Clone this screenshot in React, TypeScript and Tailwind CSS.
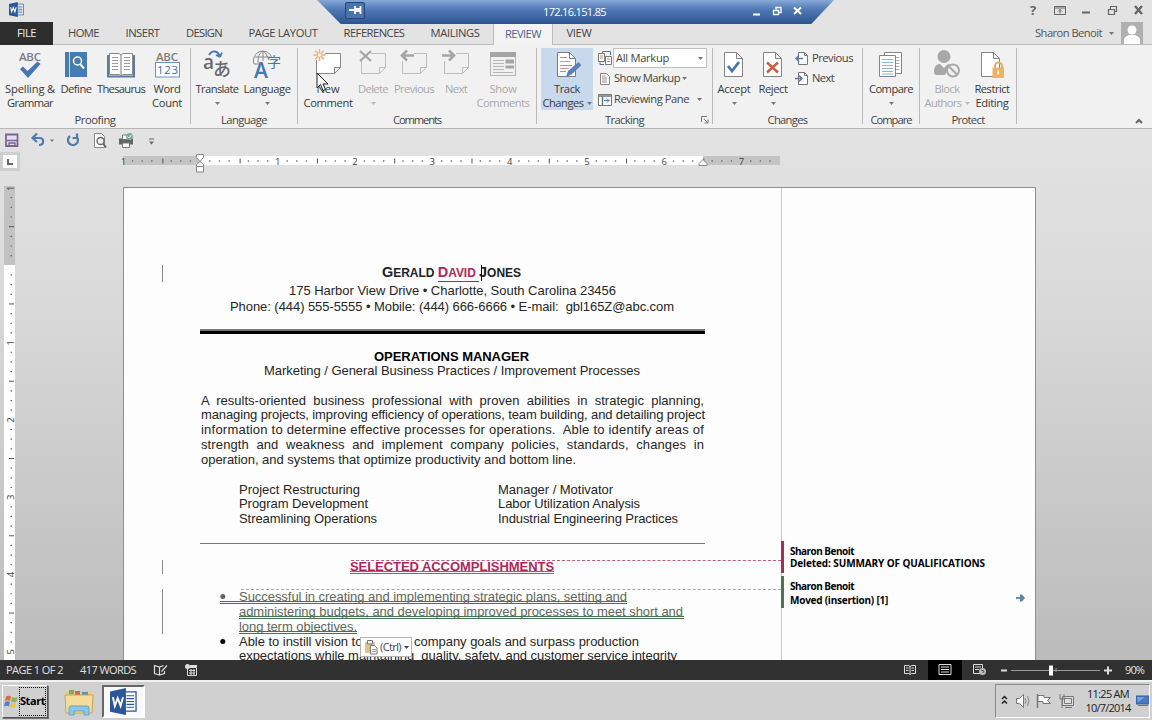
import React, { useLayoutEffect, useRef } from "react";

const UI = "font-['Open_Sans','Noto_Sans',sans-serif]";
const DOC = "font-['Liberation_Sans',Arial,sans-serif]";

/** Text tracked so that it fills exactly `w` pixels. */
function Fit({ w, className = "", children }: { w: number; className?: string; children: React.ReactNode }) {
  const ref = useRef<HTMLSpanElement>(null);
  useLayoutEffect(() => {
    const el = ref.current;
    if (!el) return;
    el.style.letterSpacing = "0px";
    const natural = el.getBoundingClientRect().width;
    const count = (el.textContent || "").length || 1;
    el.style.letterSpacing = `${(w - natural) / count}px`;
  }, [w]);
  return (
    <span ref={ref} className={`inline-block shrink-0 whitespace-pre ${className}`}>
      {children}
    </span>
  );
}

function Caret({ className = "text-[#777]" }: { className?: string }) {
  return (
    <svg width="5" height="3" viewBox="0 0 5 3" className={`shrink-0 ${className}`}>
      <path d="M0 0h5L2.5 3z" fill="currentColor" />
    </svg>
  );
}

type BtnProps = {
  icon: React.ReactNode;
  a: string;
  aw: number;
  b?: string;
  bw?: number;
  arrow?: boolean;
  disabled?: boolean;
  className: string;
};

function BigButton({ icon, a, aw, b, bw = 0, arrow, disabled, className }: BtnProps) {
  return (
    <div className={`flex h-[62px] shrink-0 flex-col items-center ${disabled ? "text-[#a9a9a9]" : "text-[#3a3a3a]"} ${className}`}>
      <div className="flex h-[34px] items-start justify-center pt-px">{icon}</div>
      <div className="flex h-[14px] items-center leading-[14px]">
        <Fit w={aw}>{a}</Fit>
      </div>
      <div className="flex h-[14px] items-center gap-[3px] leading-[14px]">
        {b && <Fit w={bw}>{b}</Fit>}
        {arrow && <Caret className={disabled ? "text-[#b9b9b9]" : "text-[#777]"} />}
      </div>
    </div>
  );
}

function Group({ label, lw, className, children, launcher }: { label: string; lw: number; className: string; children: React.ReactNode; launcher?: boolean }) {
  return (
    <div className={`relative mt-[3px] flex h-[76px] shrink-0 flex-col border-r border-[#b9b9b9] ${className}`}>
      <div className="flex h-[62px] pl-[2px]">{children}</div>
      <div className="mt-[3px] flex h-[14px] items-center justify-center leading-[14px] text-[#444]">
        <Fit w={lw}>{label}</Fit>
      </div>
      {launcher && (
        <svg className="absolute right-[3px] bottom-0" width="8" height="8" viewBox="0 0 8 8" fill="none" stroke="#777">
          <path d="M.5 6V.5H6M3 3l3.5 3.500M7 3.500V7H3.500" />
        </svg>
      )}
    </div>
  );
}

/* ---------- ribbon icons ---------- */

const SpellIcon = () => (
  <svg width="28" height="30" viewBox="0 0 28 30">
    <text x="3" y="11.500" fontSize="11.500" fontWeight="600" textLength="22" fill="#7d7d7d">ABC</text>
    <path d="M4 20l3-2.500 4.500 4.500L21.500 12.500l3 2.500L12 29z" fill="#4676b4" />
  </svg>
);
const DefineIcon = () => (
  <svg width="24" height="30" viewBox="0 0 24 30">
    <path d="M1 3h22v25H1z" fill="#457db0" />
    <path d="M5.500 3v25" stroke="#c7d8e8" />
    <circle cx="13.500" cy="12" r="4" fill="none" stroke="#fff" strokeWidth="1.500" />
    <path d="M16 15l4 4.500" stroke="#fff" strokeWidth="2" />
  </svg>
);
const ThesaurusIcon = () => (
  <svg width="30" height="30" viewBox="0 0 30 30" fill="none">
    <path d="M2 6v21.500h26V6" stroke="#5a7ba6" strokeWidth="2" />
    <path d="M3.500 4.500h9.500l2 1.500 2-1.500h9.500v21H17l-2 1.500-2-1.500H3.500z" fill="#fff" stroke="#888" />
    <path d="M15 6v20" stroke="#777" />
    <path d="M6 8.500h6M6 11.500h6M6 14.500h6M6 17.500h6M6 20.500h6M18 8.500h6M18 11.500h6M18 14.500h6M18 17.500h6M18 20.500h6" stroke="#9a9a9a" />
  </svg>
);
const CountIcon = () => (
  <svg width="28" height="30" viewBox="0 0 28 30">
    <text x="3" y="11.500" fontSize="11.500" fontWeight="600" textLength="22" fill="#7d7d7d">ABC</text>
    <rect x="2.500" y="13.500" width="24" height="14.500" fill="#fff" stroke="#6a93c0" />
    <text x="4" y="25" fontSize="11.500" textLength="21" fill="#3f6ea5">123</text>
  </svg>
);
const TranslateIcon = () => (
  <svg width="30" height="30" viewBox="0 0 30 30">
    <text x="1" y="20" fontSize="19" fontWeight="600" fill="#6a6a6a">a</text>
    <text x="11" y="27" fontSize="18" fontWeight="500" fill="#6a6a6a" className="font-['Noto_Sans_CJK_JP',sans-serif]">あ</text>
    <path d="M7 6c3-5 9-5 11 2M18 8l-4-2M18 8l2-4.500" fill="none" stroke="#4676b4" strokeWidth="1.800" />
  </svg>
);
const LanguageIcon = () => (
  <svg width="32" height="30" viewBox="0 0 32 30">
    <g fill="none" stroke="#8a8a8a">
      <path d="M3 15A9.500 9.500 0 1 1 21 9M3 15h9M4 8h15M12 2v10M12 2c-4 2-5 6-5 12M12 2c3 2 4 4 4.500 7" />
    </g>
    <text x="16" y="18" fontSize="14" fill="#4676b4" className="font-['Noto_Sans_CJK_JP',sans-serif]">字</text>
    <text x="3" y="28.500" fontSize="21" fontWeight="600" fill="#4676b4">A</text>
  </svg>
);
const NOTE = "M3.500 4.500h24v14l-6 6h-18zM27.500 18.500h-6v6";
const NewCommentIcon = () => (
  <svg width="30" height="30" viewBox="0 0 30 30" fill="none">
    <path d={NOTE} fill="#fff" stroke="#888" />
    <circle cx="6.500" cy="6" r="6" fill="#f1f1f1" />
    <path d="M6.500 0v12M.5 6h12M2.300 1.800l8.400 8.400M10.700 1.800l-8.400 8.400" stroke="#eab26c" strokeWidth="1.300" />
    <circle cx="6.500" cy="6" r="1.700" fill="#f1f1f1" />
  </svg>
);
const DeleteIcon = () => (
  <svg width="30" height="30" viewBox="0 0 30 30" fill="none">
    <path d={NOTE} stroke="#bdbdbd" />
    <path d="M1 1h12v11H1z" fill="#f1f1f1" />
    <path d="M2 2l11 10M13 2L2 12" stroke="#a5a5a5" strokeWidth="2.200" />
  </svg>
);
const PrevIcon = () => (
  <svg width="30" height="30" viewBox="0 0 30 30" fill="none">
    <path d={NOTE} stroke="#bdbdbd" />
    <path d="M1 1h14v11H1z" fill="#f1f1f1" />
    <path d="M15 6.500H3M8 1.500L3 6.500l5 5" stroke="#a5a5a5" strokeWidth="2.600" />
  </svg>
);
const NextIcon = () => (
  <svg width="30" height="30" viewBox="0 0 30 30" fill="none">
    <path d={NOTE} stroke="#bdbdbd" />
    <path d="M1 1h14v11H1z" fill="#f1f1f1" />
    <path d="M1 6.500h12M8 1.500l5 5-5 5" stroke="#a5a5a5" strokeWidth="2.600" />
  </svg>
);
const ShowCommentsIcon = () => (
  <svg width="28" height="30" viewBox="0 0 28 30" fill="none">
    <rect x="1.500" y="3.500" width="25" height="23" stroke="#b5b5b5" />
    <path d="M1 3h26v5H1z" fill="#a5a5a5" />
    <path d="M4 11.500h11M4 14.500h11M4 17.500h11M4 20.500h11M4 23.500h20" stroke="#b5b5b5" />
    <path d="M16.500 10.500H25v4h-8.500zM16.500 16.500H25v3h-8.500z" fill="#a5a5a5" />
  </svg>
);
const TrackIcon = () => (
  <svg width="28" height="30" viewBox="0 0 28 30" fill="none">
    <path d="M4.500 3.500h12l6 6v18h-18z" fill="#fff" stroke="#7d7d7d" />
    <path d="M16.500 3.500v6h6" stroke="#7d7d7d" />
    <path d="M7 8.500h7M7 16.500h12M7 22.500h6" stroke="#999" />
    <path d="M7 12.500h10M7 19.500h9" stroke="#d29a90" />
    <path d="M13 28l2-6L25.500 13l3 3-10 9.500z" fill="#5b80b5" />
  </svg>
);
const AcceptIcon = () => (
  <svg width="22" height="30" viewBox="0 0 22 30" fill="none">
    <path d="M1.500 3.500h12l6 6v18h-18zM13.500 3.500v6h6" fill="#fff" stroke="#858585" />
    <path d="M5 17l4 5 7-9" stroke="#4676b4" strokeWidth="2.800" />
  </svg>
);
const RejectIcon = () => (
  <svg width="22" height="30" viewBox="0 0 22 30" fill="none">
    <path d="M1.500 3.500h12l6 6v18h-18zM13.500 3.500v6h6" fill="#fff" stroke="#858585" />
    <path d="M5 13.500l11 10M16 13.500l-11 10" stroke="#d0583f" strokeWidth="2.400" />
  </svg>
);
const CompareIcon = () => (
  <svg width="28" height="30" viewBox="0 0 28 30" fill="none">
    <path d="M7.500 3.500h17v21h-17z" fill="#fff" stroke="#858585" />
    <path d="M19 8.500h3.500M19 11.500h3.500M19 14.500h3.500M19 17.500h3.500M19 20.500h3.500" stroke="#aaa" />
    <path d="M2.500 6.500h16v21h-16z" fill="#fff" stroke="#76889b" />
    <path d="M5 10.500h11M5 13.500h11M5 16.500h11M5 19.500h11M5 22.500h11M5 25h11" stroke="#8db6cf" />
  </svg>
);
const BlockIcon = () => (
  <svg width="28" height="30" viewBox="0 0 28 30" fill="none">
    <circle cx="11" cy="7.500" r="6.500" fill="#a8a8a8" />
    <path d="M1 23c0-6 3-8 6-8l4 4 4-4 2 1-5 10H4c-2 0-3-1-3-3z" fill="#a8a8a8" />
    <circle cx="20" cy="21.500" r="6" fill="#f1f1f1" stroke="#a8a8a8" strokeWidth="2" />
    <path d="M16 17.500l8 8" stroke="#a8a8a8" strokeWidth="2" />
  </svg>
);
const RestrictIcon = () => (
  <svg width="28" height="30" viewBox="0 0 28 30" fill="none">
    <path d="M3.500 3.500h12l6 6v18h-18zM15.500 3.500v6h6" fill="#fff" stroke="#858585" />
    <path d="M17 20v-3a3.500 3.500 0 0 1 7 0v3" stroke="#e5ad62" strokeWidth="2" />
    <path d="M14.500 18.500H26V29H14.500z" fill="#e9b368" />
    <path d="M20.200 21.500v4" stroke="#fff" strokeWidth="1.500" />
  </svg>
);
const PageArrow = () => (
  <svg width="14" height="15" viewBox="0 0 14 15" fill="none">
    <path d="M3.500 1.500h6l3 3v9h-9zM9.500 1.500v3h3" fill="#fff" stroke="#777" />
    <path d="M1 7.500h7M4 4.500l-3 3 3 3" stroke="#5b7ba8" strokeWidth="1.500" />
  </svg>
);
const PageArrowNext = () => (
  <svg width="14" height="15" viewBox="0 0 14 15" fill="none">
    <path d="M3.500 1.500h6l3 3v9h-9zM9.500 1.500v3h3" fill="#fff" stroke="#777" />
    <path d="M0 7.500h7M4 4.500l3 3-3 3" stroke="#5b7ba8" strokeWidth="1.500" />
  </svg>
);

const WordLogo = ({ className }: { className: string }) => (
  <svg viewBox="0 0 28 28" className={className}>
    <path d="M14 4h13v20H14z" fill="#fff" stroke="#2b579a" strokeWidth="1.300" />
    <path d="M17 8h8M17 11h8M17 14h8M17 17h8M17 20h8" stroke="#2b579a" strokeWidth="1.200" />
    <path d="M0 3.500L16.500 0v28L0 24.500z" fill="#2b579a" />
    <path d="M3 9.500l2 9 3-8 3 8 2.500-9" fill="none" stroke="#fff" strokeWidth="2" />
  </svg>
);

/* ---------- title, tabs, ribbon ---------- */

function TitleBar() {
  return (
    <div className="relative flex h-[22px] shrink-0 items-center pl-[9px]">
      <WordLogo className="mt-[-3px] size-[15px]" />
      <div className="absolute top-0 left-[317px] z-10 flex h-[24px] w-[517px] items-center bg-linear-to-b from-[#86a9d6] via-[#4f79b5] via-40% to-[#2b5390] [clip-path:polygon(0_0,100%_0,95.600%_100%,4.600%_100%)]">
        <div className="mt-[-4px] ml-[28px] flex h-[17px] w-[20px] items-center justify-center rounded-[2px] border border-[#24467d] bg-[#4a72ab]">
          <svg width="13" height="10" viewBox="0 0 13 10" fill="none" stroke="#fff" strokeWidth="1.800">
            <path d="M0 5h5M6 1v8M6 4h5M6 6h5M11.500 1v8" />
          </svg>
        </div>
        <div className={`ml-[178px] text-[11px] leading-[22px] text-white ${UI}`}>
          <Fit w={63}>172.16.151.85</Fit>
        </div>
        <svg className="mt-[-2px] ml-[147px]" width="50" height="12" viewBox="0 0 50 12" fill="none" stroke="#fff">
          <path d="M0 9.500h7" strokeWidth="2" />
          <path d="M20.500 5.500h5v4h-5zM23 5V2.500h5v5h-2" strokeWidth="1.300" />
          <path d="M41 2.500l7 6.500M48 2.500L41 9" strokeWidth="2" />
        </svg>
      </div>
      <svg className="mt-[-2px] ml-auto" width="128" height="16" viewBox="0 0 128 16" fill="none" stroke="#666">
        <text x="6" y="13" fontSize="13" fontWeight="700" fill="#666" stroke="none" className={UI}>?</text>
        <path d="M30.500 4.500h11v8h-11zM30.500 6h11M36 11.500v-4M34 9.500l2-2 2 2" />
        <path d="M58 10.500h8" strokeWidth="2" />
        <path d="M84.500 7.500h6v5h-6zM86.500 7V4.500h6v5h-2" strokeWidth="1.200" />
        <path d="M111 4l7 8M118 4l-7 8" strokeWidth="2.400" />
      </svg>
    </div>
  );
}

const tabs = [
  { t: "HOME", w: 31, c: "w-[61px]" },
  { t: "INSERT", w: 34, c: "w-[57px]" },
  { t: "DESIGN", w: 36, c: "w-[66px]" },
  { t: "PAGE LAYOUT", w: 69, c: "w-[92px]" },
  { t: "REFERENCES", w: 61, c: "w-[90px]" },
  { t: "MAILINGS", w: 49, c: "mr-[2px] w-[72px]" },
  { t: "REVIEW", w: 36, c: "w-[60px]", active: true },
  { t: "VIEW", w: 25, c: "w-[52px]" },
];

function Tabs() {
  return (
    <div className="flex h-[23px] shrink-0 items-stretch border-b border-[#bcbcbc] text-[#444]">
      <div className="flex h-[23px] w-[53px] items-center justify-center bg-[#2d2d2d] text-[#eee]">
        <Fit w={19}>FILE</Fit>
      </div>
      {tabs.map((x) => (
        <div
          key={x.t}
          className={`flex items-center justify-center pt-px ${x.c} ${x.active ? "z-[1] -mb-px border-x border-[#bcbcbc] bg-[#f3f3f3] text-[#47659a]" : ""}`}
        >
          <Fit w={x.w}>{x.t}</Fit>
        </div>
      ))}
      <div className="ml-auto flex items-center gap-[7px] text-[#555]">
        <Fit w={67}>Sharon Benoit</Fit>
        <Caret />
        <svg width="22" height="22" viewBox="0 0 22 22" className="mr-[9px]">
          <path d="M0 0h22v22H0z" fill="#b0b0b0" />
          <circle cx="11" cy="8" r="4.500" fill="#fff" />
          <path d="M3 22v-4c0-3 3-5 8-5s8 2 8 5v4z" fill="#fff" />
        </svg>
      </div>
    </div>
  );
}

function Ribbon() {
  return (
    <div className="relative flex h-[84px] shrink-0 border-b border-[#b5b5b5] bg-[#f1f1f1]">
      <Group label="Proofing" lw={41} className="w-[191px]">
        <BigButton icon={<SpellIcon />} a="Spelling &" aw={50} b="Grammar" bw={46} className="w-[56px]" />
        <BigButton icon={<DefineIcon />} a="Define" aw={31} className="w-[36px]" />
        <BigButton icon={<ThesaurusIcon />} a="Thesaurus" aw={48} className="w-[54px]" />
        <BigButton icon={<CountIcon />} a="Word" aw={27} b="Count" bw={30} className="w-[38px]" />
      </Group>
      <Group label="Language" lw={46} className="w-[107px]">
        <BigButton icon={<TranslateIcon />} a="Translate" aw={43} arrow className="w-[48px]" />
        <BigButton icon={<LanguageIcon />} a="Language" aw={47} arrow className="w-[52px]" />
      </Group>
      <Group label="Comments" lw={48} className="w-[239px]">
        <BigButton icon={<NewCommentIcon />} a="New" aw={23} b="Comment" bw={49} className="ml-[2px] w-[52px]" />
        <BigButton icon={<DeleteIcon />} a="Delete" aw={30} arrow disabled className="w-[38px]" />
        <BigButton icon={<PrevIcon />} a="Previous" aw={40} disabled className="w-[44px]" />
        <BigButton icon={<NextIcon />} a="Next" aw={22} disabled className="w-[40px]" />
        <BigButton icon={<ShowCommentsIcon />} a="Show" aw={27} b="Comments" bw={53} disabled className="w-[54px]" />
      </Group>
      <Group label="Tracking" lw={39} className="w-[176px]" launcher>
        <BigButton icon={<TrackIcon />} a="Track" aw={26} b="Changes" bw={41} arrow className="ml-[2px] w-[52px] bg-[#c9d9ed]" />
        <div className="flex w-[116px] shrink-0 flex-col pl-[4px] text-[#444]">
          <div className="flex h-[20px] items-center">
            <svg width="16" height="16" viewBox="0 0 16 16" fill="none" stroke="#777">
              <path d="M5.500 3V1.500h5M1.500 3.500h6v8h-6zM8.500 6.500h6v8h-6z" fill="#fff" />
              <path d="M3 6h3M3 8h3M10 9h3M10 11.500h3" stroke="#c27f77" />
              <path d="M10 1.500h3.500V5M3 12v2.500h4" stroke="#4676b4" />
            </svg>
            <div className="flex h-[20px] w-[94px] items-center justify-between border border-[#c0c0c0] bg-white pr-[3px] pl-[2px]">
              <Fit w={53}>All Markup</Fit>
              <Caret />
            </div>
          </div>
          <div className="flex h-[21px] items-center">
            <svg width="16" height="16" viewBox="0 0 16 16" fill="none" stroke="#888">
              <path d="M3.500 2.500h6l3 3v8h-9z" fill="#fff" />
              <path d="M5 7h5M5 11h5" />
              <path d="M5 9h5M5 5h3" stroke="#c98d85" />
            </svg>
            <Fit w={66} className="mr-[2px] ml-px">Show Markup</Fit>
            <Caret />
          </div>
          <div className="flex h-[21px] items-center">
            <svg width="16" height="14" viewBox="0 0 16 14" fill="none" stroke="#777">
              <path d="M1.500 1.500h13v11h-13z" fill="#fff" />
              <path d="M1.500 3h13M5.500 3v9" strokeWidth="1.500" />
              <path d="M7 7.500h5M10 5.500l2 2-2 2" stroke="#4676b4" />
            </svg>
            <Fit w={75} className="mr-[8px] ml-px">Reviewing Pane</Fit>
            <Caret />
          </div>
        </div>
      </Group>
      <Group label="Changes" lw={40} className="w-[150px]">
        <BigButton icon={<AcceptIcon />} a="Accept" aw={33} arrow className="w-[38px]" />
        <BigButton icon={<RejectIcon />} a="Reject" aw={29} arrow className="w-[40px]" />
        <div className="flex flex-col pl-[2px] text-[#444]">
          <div className="flex h-[20px] items-center gap-[3px]">
            <PageArrow />
            <Fit w={41}>Previous</Fit>
          </div>
          <div className="flex h-[21px] items-center gap-[3px]">
            <PageArrowNext />
            <Fit w={22}>Next</Fit>
          </div>
        </div>
      </Group>
      <Group label="Compare" lw={41} className="w-[57px]">
        <BigButton icon={<CompareIcon />} a="Compare" aw={44} arrow className="w-[52px]" />
      </Group>
      <Group label="Protect" lw={33} className="w-[97px]">
        <BigButton icon={<BlockIcon />} a="Block" aw={25} b="Authors" bw={37} arrow disabled className="w-[50px]" />
        <BigButton icon={<RestrictIcon />} a="Restrict" aw={35} b="Editing" bw={33} className="w-[40px]" />
      </Group>
      <svg className="absolute right-[9px] bottom-[4px]" width="8" height="6" viewBox="0 0 8 6" fill="none" stroke="#666" strokeWidth="2">
        <path d="M1 5l3-3 3 3" />
      </svg>
      <svg className="absolute top-[27px] left-[316px]" width="13" height="20" viewBox="0 0 13 20">
        <path d="M1 1v15l3.500-3.500L7 18.500l2.500-1L7 12h5z" fill="#fff" stroke="#222" />
      </svg>
    </div>
  );
}

function QuickAccess() {
  return (
    <div className="flex h-[23px] shrink-0 items-center pl-[4px]">
      <svg width="160" height="18" viewBox="0 0 160 18" fill="none">
        <path d="M2 2.500h11.500v11.500H2z" stroke="#80609a" strokeWidth="1.800" />
        <path d="M3 8.500h10" stroke="#80609a" strokeWidth="1.500" />
        <path d="M5 14v-3h6v3" stroke="#80609a" strokeWidth="1.300" />
        <path d="M29 6h6.500c5 0 5 7-.5 7M33 1.500L28.500 6l4.500 4" stroke="#4f7ab3" strokeWidth="2.200" />
        <path d="M46 7.500h4l-2 2.500z" fill="#777" />
        <path d="M72.500 4.500a5 5 0 1 1-6.500-.5M73 1.500V6h-4.500" stroke="#5279a8" strokeWidth="2.200" />
        <path d="M90.500 1.500h7l3 3v11h-10z" fill="#fff" stroke="#888" />
        <circle cx="96.500" cy="9" r="3.500" fill="#eee" stroke="#666" strokeWidth="1.300" />
        <path d="M99 11.500l3 4" stroke="#666" strokeWidth="2" />
        <path d="M115 6.500h14v6h-14z" fill="#666" />
        <path d="M118.500 3h7v4.500h-7zM118.500 11h7v4.500h-7z" fill="#fff" stroke="#777" />
        <circle cx="125.500" cy="4.500" r="3.500" fill="#80aa99" />
        <path d="M123.500 4.500L125 6l2.500-3" stroke="#fff" />
        <path d="M145 7h5" stroke="#666" />
        <path d="M145 9.500h5l-2.500 3z" fill="#666" />
      </svg>
    </div>
  );
}

/* ---------- rulers ---------- */

const STEP = 9.66;

function HorizontalRuler() {
  const marks = Array.from({ length: 68 }, (_, i) => i - 7).filter((i) => i % 8 !== 0 && i <= 59);
  return (
    <svg width="670" height="20" viewBox="0 0 670 20" className="block">
      <path d="M3 2h657v9H3z" fill="#c4c4c4" />
      <path d="M80 2h503v9H80z" fill="#fff" />
      {marks.map((i) =>
        i % 4 === 0 ? (
          <path key={i} d={`M${81.500 + i * STEP} 4.500v5`} stroke="#555" />
        ) : (
          <path key={i} d={`M${79.500 + i * STEP} 7h1.300`} stroke="#666" strokeWidth="1.300" />
        )
      )}
      <g fontSize="9.500" fill="#444" textAnchor="middle">
        <text x="3.500" y="10.500">1</text>
        {[1, 2, 3, 4, 5, 6, 7].map((n) => (
          <text key={n} x={80.500 + n * STEP * 8} y="10.500">{n}</text>
        ))}
      </g>
      <g fill="#fff" stroke="#888">
        <path d="M76.500.5h7v3l-3.500 4-3.500-4zM76.500 12.500v-2L80 7.500l3.500 3v2z" />
        <path d="M76.500 12.500h7v5.500h-7z" />
        <path d="M579 11.500V9.500l4-4 4 4v2z" />
      </g>
    </svg>
  );
}

function VerticalRuler() {
  const marks = Array.from({ length: 50 }, (_, i) => i - 7).filter((i) => i % 8 !== 0 && i <= 40);
  return (
    <svg width="16" height="475" viewBox="0 0 16 475" className="block">
      <path d="M4 1h11v79H4z" fill="#c2c2c2" />
      <path d="M4 80h11v395H4z" fill="#fff" />
      {marks.map((i) =>
        i % 4 === 0 ? (
          <path key={i} d={`M9 ${80.300 + i * STEP}h5`} stroke="#555" />
        ) : (
          <path key={i} d={`M10.500 ${80.300 + i * STEP}h1.500`} stroke="#666" strokeWidth="1.200" />
        )
      )}
      <g fontSize="9.500" fill="#444" textAnchor="middle">
        {[-1, 1, 2, 3, 4, 5].map((n) => (
          <text key={n} transform={`translate(14 ${80.500 + n * STEP * 8}) rotate(-90)`}>{Math.abs(n)}</text>
        ))}
      </g>
    </svg>
  );
}

/* ---------- document ---------- */

const para: [string, number][] = [
  ["A  results-oriented  business  professional  with  proven  abilities  in  strategic  planning,", 503],
  ["managing projects, improving efficiency of operations, team building, and detailing project", 504],
  ["information to determine effective processes for operations.  Able to identify areas of", 503],
  ["strength  and  weakness  and  implement  company  policies,  standards,  changes  in", 503],
  ["operation, and systems that optimize productivity and bottom line.", 375],
];

const skills: [string, number, string, number][] = [
  ["Project Restructuring", 121, "Manager / Motivator", 115],
  ["Program Development", 129, "Labor Utilization Analysis", 142],
  ["Streamlining Operations", 138, "Industrial Engineering Practices", 180],
];

const Dot = ({ className }: { className: string }) => (
  <svg width="19" height="7" viewBox="0 0 19 7" className={`shrink-0 ${className}`}>
    <circle cx="2.800" cy="3.500" r="2.500" fill="currentColor" />
  </svg>
);

function Page() {
  return (
    <div className={`relative ml-[107px] flex h-[473px] w-[913px] overflow-hidden border-x border-t border-[#8f8f8f] bg-[#fdfdfd] text-[13px] text-[#262626] ${DOC}`}>
      <div className="flex w-[657px] shrink-0 flex-col pt-[76px] pl-[76px] *:shrink-0">
        <div className="flex h-[18px] items-center pl-[182px] text-[12px] font-bold text-[#222]">
          <Fit w={139}>
            <span className="text-[14.500px]">G</span>ERALD{" "}
            <span className="border-b border-[#b0265a] pb-px text-[#b0265a]">
              <span className="text-[14.500px]">D</span>AVID{" "}
            </span>
            <span className="text-[14.500px]">J</span>ONES
          </Fit>
        </div>
        <div className="flex h-[17px] items-center pl-[89px]">
          <Fit w={327}>175 Harbor View Drive • Charlotte, South Carolina 23456</Fit>
        </div>
        <div className="flex h-[16px] items-center pl-[30px]">
          <Fit w={444}>Phone: (444) 555-5555 • Mobile: (444) 666-6666 • E-mail:  gbl165Z@abc.com</Fit>
        </div>
        <div className="mt-[14px] h-[5px] w-[505px] border-t-2 border-[#777] bg-black" />
        <div className="mt-[15px] flex h-[15px] items-center pl-[174px] font-bold text-black">
          <Fit w={155}>OPERATIONS MANAGER</Fit>
        </div>
        <div className="flex h-[14px] items-center pl-[64px]">
          <Fit w={376}>Marketing / General Business Practices / Improvement Processes</Fit>
        </div>
        <div className="mt-[15px] flex flex-col">
          {para.map(([t, w]) => (
            <div key={t} className="flex h-[14.800px] items-center pl-px">
              <Fit w={w}>{t}</Fit>
            </div>
          ))}
        </div>
        <div className="mt-[15px] flex flex-col">
          {skills.map(([a, aw, b, bw]) => (
            <div key={a} className="flex h-[14.800px] items-center pl-[39px]">
              <div className="w-[259px]">
                <Fit w={aw}>{a}</Fit>
              </div>
              <Fit w={bw}>{b}</Fit>
            </div>
          ))}
        </div>
        <div className="mt-[16.600px] h-[1.500px] w-[505px] bg-[#777]" />
        <div className="mt-[15px] flex h-[15px] items-center pl-[150px] font-bold text-[#b0265a]">
          <Fit w={204} className="h-[15px] border-b-[3px] border-double border-[#c04a74] leading-[15px]">SELECTED ACCOMPLISHMENTS</Fit>
        </div>
        <div className="mt-[15px] flex flex-col text-[#5d685f]">
          <div className="ml-[20px] flex h-[14.800px] w-[407px] items-center border-b-[3px] border-double border-[#4a7350]">
            <Dot className="mb-[-3px]" />
            <Fit w={388} className="mb-[-3px]">Successful in creating and implementing strategic plans, setting and</Fit>
          </div>
          <div className="ml-[39px] flex h-[14.800px] w-[445px] items-center border-b-[3px] border-double border-[#4a7350]">
            <Fit w={444} className="mb-[-3px]">administering budgets, and developing improved processes to meet short and</Fit>
          </div>
          <div className="ml-[39px] flex h-[14.800px] w-[118px] items-center border-b-[3px] border-double border-[#4a7350]">
            <Fit w={118} className="mb-[-3px]">long term objectives.</Fit>
          </div>
          <div className="ml-[20px] flex h-[14.800px] items-center text-[#262626]">
            <Dot className="text-black" />
            <Fit w={400}>Able to instill vision to achieve company goals and surpass production</Fit>
          </div>
          <div className="ml-[39px] flex h-[14.800px] items-center text-[#262626]">
            <Fit w={438}>expectations while maintaining  quality, safety, and customer service integrity</Fit>
          </div>
        </div>
      </div>

      <div className={`flex flex-1 flex-col border-l border-[#c9c9c9] pt-[353px] text-[10px] leading-[12px] font-bold text-black ${UI}`}>
        <div className="-ml-px flex h-[32px] flex-col border-l-[3px] border-[#b0265a] pt-[4px] pl-[6px]">
          <Fit w={64} className="self-start">Sharon Benoit</Fit>
          <Fit w={195} className="self-start">Deleted: SUMMARY OF QUALIFICATIONS</Fit>
        </div>
        <div className="mt-[3px] -ml-px flex h-[32px] flex-col gap-[2px] border-l-[3px] border-[#4a7350] pt-[4px] pl-[6px]">
          <Fit w={64} className="self-start">Sharon Benoit</Fit>
          <div className="flex items-center justify-between pr-[9px]">
            <Fit w={98}>Moved (insertion) [1]</Fit>
            <svg width="10" height="8" viewBox="0 0 10 8" className="mt-[-4px]">
              <path d="M0 4h6" stroke="#6b8caa" strokeWidth="2" />
              <path d="M4 .5h2l3 3.500-3 3.500H4z" fill="#5f86ab" />
            </svg>
          </div>
        </div>
      </div>

      <div className="absolute top-[77px] left-[38px] h-[17px] w-px bg-[#888]" />
      <div className="absolute top-[372px] left-[38px] h-[14px] w-px bg-[#888]" />
      <div className="absolute top-[401px] left-[38px] h-[45px] w-px bg-[#888]" />
      <div className="absolute top-[77px] left-[357px] h-[16px] w-px bg-black" />
      <div className="absolute top-[372px] left-[227px] w-[430px] border-t border-dashed border-[#bd5c80]" />
      <div className="absolute top-[401px] left-[117px] w-[540px] border-t border-dashed border-[#a3aca5]" />
      <div className={`absolute top-[449px] left-[236px] flex h-[20px] w-[52px] items-center gap-[2px] border border-[#b5b5b5] bg-white pl-[3px] text-[11px] text-[#444] ${UI}`}>
        <svg width="14" height="15" viewBox="0 0 14 15" fill="none" className="shrink-0">
          <path d="M1 2h10v11H1z" fill="#dcc48c" />
          <path d="M3.500.5h5V4h-5z" fill="#eee" stroke="#777" />
          <path d="M6.500 5.500h4l2.500 2.500v6H6.500z" fill="#fff" stroke="#777" />
          <path d="M8 9.500h4M8 11.500h4" stroke="#999" />
        </svg>
        <Fit w={21}>(Ctrl)</Fit>
        <Caret className="ml-px text-[#444]" />
      </div>
    </div>
  );
}

/* ---------- bottom bars ---------- */

function StatusBar() {
  return (
    <div className="flex h-[20px] shrink-0 items-center bg-[#313131] pl-[6px] text-[11px] text-[#e2e2e2]">
      <Fit w={57}>PAGE 1 OF 2</Fit>
      <Fit w={56} className="ml-[17px]">417 WORDS</Fit>
      <svg className="ml-[17px]" width="46" height="14" viewBox="0 0 46 14" fill="none" stroke="#ddd">
        <path d="M6.500 12L1.500 10.500v-8L6.500 4l4-1.500M6.500 4v8l5-1.500V8M8.500 8.500l5.500-6" strokeWidth="1.200" />
        <path d="M34.500 4.500h9v8h-9zM36 7.500h6M36 10h6M38 6v6M41 6v6" />
        <path d="M37 3h7" strokeWidth="2" />
        <circle cx="34.500" cy="3.500" r="2.500" fill="#ddd" stroke="none" />
      </svg>
      <svg className="ml-auto" width="91" height="20" viewBox="-1 0 91 20" fill="none" stroke="#ddd">
        <path d="M24 0h34v20H24z" fill="#000" stroke="none" />
        <path d="M.5 5.500h4l1.500 1 1.500-1h4v8h-4l-1.500 1-1.500-1h-4zM6 6v8M2 8h2.500M2 10.500h2.500M7.500 8H10M7.500 10.500H10" />
        <path d="M35 4.500h12v10H35zM37 7h8M37 9.500h8M37 12h8" />
        <path d="M77 13.500h-7.500v-9h9V8M71 7h6M71 9.500h4" />
        <circle cx="78.500" cy="11.500" r="3.500" fill="#bbb" stroke="none" />
        <path d="M77 10l3 1-1 2" stroke="#555" />
      </svg>
      <svg className="ml-[7px]" width="111" height="20" viewBox="0 0 111 20" stroke="#ddd">
        <path d="M0 10.500h6M103 10.500h8M107 6.500v8" strokeWidth="2" />
        <path d="M10 10.500h89" stroke="#9a9a9a" />
        <path d="M50 5.500v10" stroke="#fff" strokeWidth="4" />
        <path d="M55 8v4" stroke="#999" />
      </svg>
      <Fit w={19} className="mr-[8px] ml-[13px]">90%</Fit>
    </div>
  );
}

function TaskBar() {
  return (
    <div className="flex h-[40px] shrink-0 border-t-2 border-t-[#f2f2f2] bg-[#d0d0d0] pl-[2px]">
      <div className="mt-[3px] flex h-[33px] w-[46px] items-center border border-t-white border-r-[#555] border-b-[#555] border-l-white shadow-[1px_1px_0_#777]">
        <svg width="15" height="15" viewBox="0 0 15 15" className="ml-px shrink-0">
          <path d="M2 2.500q2.500-1.500 5 0L6 7Q3.500 5.500 1 7z" fill="#dd6a3e" />
          <path d="M8 3q2.500 1.500 5.500 0l-1 4.500Q9.500 9 7 7.500z" fill="#85b45a" />
          <path d="M1 8q2.500-1.500 5 0l-1 4.500Q2.500 11 0 12.500z" fill="#4c83cc" />
          <path d="M7 8.500Q9.500 10 12 8.500l-1 4.500Q8.500 14.500 6 13z" fill="#ecc04a" />
        </svg>
        <div className="flex h-[29px] w-[27px] shrink-0 items-center justify-center border border-dotted border-black text-[11px] font-bold text-black">
          <Fit w={25}>Start</Fit>
        </div>
      </div>
      <svg className="mt-[5px] ml-[15px]" width="32" height="31" viewBox="0 0 32 31">
        <path d="M2 5l8-3 2 2h16v19H2z" fill="#e6cc7c" />
        <path d="M6 3h5v4H6z" fill="#75ac67" />
        <path d="M12 4h5v4h-5z" fill="#c66b55" />
        <path d="M19 5h6v3h-6z" fill="#5c91c7" />
        <path d="M2 8h28l-1 18H3z" fill="#f2dd9a" stroke="#c4a658" />
        <path d="M6 28v-7q0-2 2-2h16q2 0 2 2v7h-5v-4H11v4z" fill="#8cc5e8" stroke="#64a5ce" />
      </svg>
      <div className="mt-[3px] ml-[7px] flex h-[33px] w-[43px] items-center justify-center border-2 border-t-[#666] border-r-white border-b-white border-l-[#666] bg-[#f9f9f9]">
        <WordLogo className="size-[27px]" />
      </div>
      <div className="mt-[2px] mr-[2px] ml-auto flex h-[34px] w-[155px] items-center border border-t-[#8a8a8a] border-r-white border-b-white border-l-[#8a8a8a]">
        <svg width="78" height="18" viewBox="0 0 78 18" fill="none" stroke="#777" className="ml-[4px] shrink-0">
          <path d="M2 7l2.500-2.500L7 7M2 11.500L4.500 9 7 11.500" stroke="#222" strokeWidth="1.500" />
          <path d="M16.500 6.500h3l4-4v13l-4-4h-3z" fill="#fff" />
          <path d="M25 6q2 3 0 6M27.500 4q3 5 0 10" stroke="#888" />
          <path d="M37.500 2v14" strokeWidth="1.500" />
          <path d="M38 3.500h6v2h6.500l-3 3 3 3H43v-2h-5z" fill="#f8f8f8" />
          <path d="M62.500 4.500h11v9h-11zM64.500 6.500h7v5h-7z" fill="#ddd" />
          <path d="M60 2v5h4V2M62 7v9M65 15.500h7" />
        </svg>
        <div className="ml-[7px] flex w-[46px] shrink-0 flex-col items-center text-[11px] leading-[14px] text-[#222]">
          <Fit w={42}>11:25 AM</Fit>
          <Fit w={45}>10/7/2014</Fit>
        </div>
        <svg width="13" height="12" viewBox="0 0 13 12" className="ml-[5px] shrink-0">
          <path d="M0 1h13v8H0z" fill="#4379c5" stroke="#325d99" />
          <path d="M1 2h8L2 7z" fill="#77a3dd" />
          <path d="M2 10.500h10" stroke="#777" />
        </svg>
      </div>
    </div>
  );
}

export default function App() {
  return (
    <div className={`flex h-[720px] w-[1152px] flex-col overflow-hidden bg-[#e3e3e3] text-[11.200px] ${UI}`}>
      <TitleBar />
      <Tabs />
      <Ribbon />
      <div className="flex h-[531px] min-h-0 flex-1 flex-col bg-linear-to-b from-[#e3e3e3] via-[#dadada] via-30% to-[#bbbbbb]">
        <QuickAccess />
        <div className="flex h-[33px] shrink-0">
          <div className="flex h-[19px] w-[20px] items-center justify-center border-[3px] border-[#cfcfcf] bg-white">
            <svg width="6" height="6" viewBox="0 0 6 6" fill="none" stroke="#666" strokeWidth="2">
              <path d="M1 0v5h5" />
            </svg>
          </div>
          <div className="ml-[100px] pt-[2px]">
            <HorizontalRuler />
          </div>
        </div>
        <div className="flex min-h-0 flex-1 items-start overflow-hidden">
          <VerticalRuler />
          <div className="pt-[2px]">
            <Page />
          </div>
        </div>
      </div>
      <StatusBar />
      <TaskBar />
    </div>
  );
}
